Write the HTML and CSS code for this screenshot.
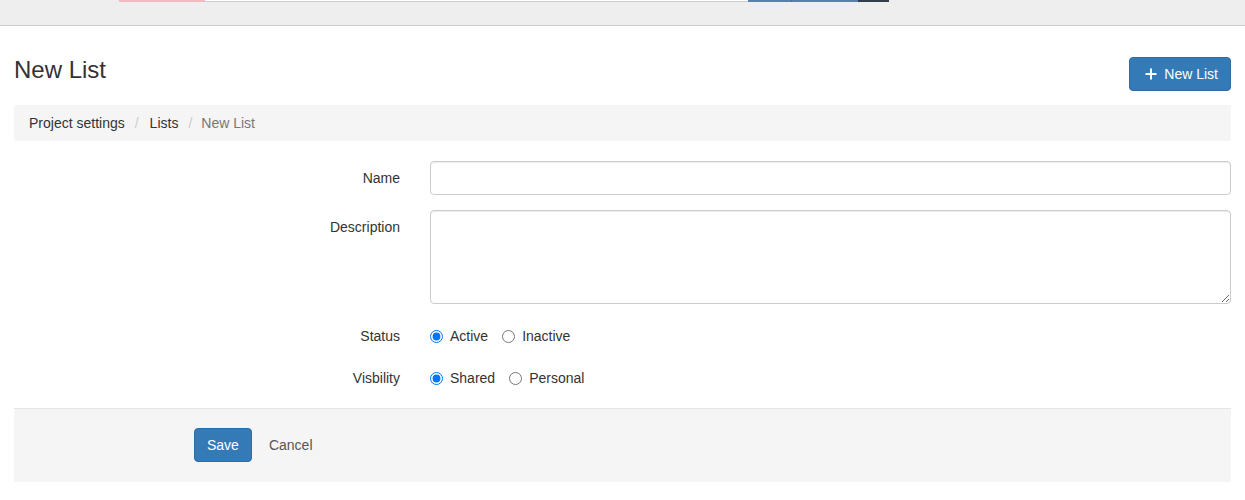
FILE: index.html
```html
<!DOCTYPE html>
<html lang="en">
<head>
    <meta charset="UTF-8">
    <meta name="viewport" content="width=device-width, initial-scale=1.0">
    <title>New List</title>
    <link rel="stylesheet" href="styles.css">
</head>
<body>
    <div class="topbar">
        <div class="topbar-edge">
            <span class="edge-flash"></span>
            <span class="edge-search"></span>
            <span class="edge-btn edge-btn-a"></span>
            <span class="edge-btn edge-btn-b"></span>
            <span class="edge-btn edge-btn-dark"></span>
        </div>
    </div>

    <div class="page">
        <div class="page-head">
            <h2>New List</h2>
            <a class="btn btn-primary" href="#">
                <svg class="icon-plus" width="12" height="12" viewBox="0 0 12 12">
                    <path d="M6 0.5v11M0.5 6h11" stroke="#fff" stroke-width="2" fill="none"/>
                </svg>New List
            </a>
        </div>

        <ol class="breadcrumb">
            <li><a href="#">Project settings</a></li>
            <li><a href="#">Lists</a></li>
            <li class="active">New List</li>
        </ol>

        <form class="list-form">
            <div class="form-row">
                <label for="name">Name</label>
                <div><input type="text" id="name" class="form-control"></div>
            </div>
            <div class="form-row">
                <label for="description">Description</label>
                <div><textarea id="description" class="form-control form-textarea"></textarea></div>
            </div>
            <div class="form-row">
                <label>Status</label>
                <div class="radio-group">
                    <label class="radio-inline"><input type="radio" name="status" checked>Active</label>
                    <label class="radio-inline"><input type="radio" name="status">Inactive</label>
                </div>
            </div>
            <div class="form-row form-row-last">
                <label>Visbility</label>
                <div class="radio-group">
                    <label class="radio-inline"><input type="radio" name="visibility" checked>Shared</label>
                    <label class="radio-inline"><input type="radio" name="visibility">Personal</label>
                </div>
            </div>

            <div class="form-actions">
                <button type="button" class="btn btn-primary">Save</button>
                <a class="btn btn-link" href="#">Cancel</a>
            </div>
        </form>
    </div>
</body>
</html>
```

FILE: styles.css
```css
/* Base */
body {
    margin: 0;
    font-family: "Liberation Sans", Arial, sans-serif;
    font-size: 14px;
    line-height: 20px;
    color: #333;
    background: #fff;
}

a {
    text-decoration: none;
}

/* Top bar, scrolled so only the bottom edge of its controls shows */
.topbar {
    height: 25px;
    background: #eee;
    border-bottom: 1px solid #ccc;
}

.topbar-edge {
    display: flex;
    padding-left: 119px;
    height: 2px;
}

.edge-flash {
    width: 86px;
    background: #efbac1;
}

.edge-search {
    width: 543px;
    height: 1px;
    background: #fff;
    border-bottom: 1px solid #ccc;
}

.edge-btn {
    background: #5a7eae;
}

.edge-btn-a {
    width: 43px;
}

.edge-btn-b {
    width: 66px;
    border-left: 1px solid #4a6c99;
}

.edge-btn-dark {
    width: 31px;
    background: #333d4b;
}

/* Page */
.page {
    padding: 31px 14px 0;
}

.page-head {
    display: flex;
    justify-content: space-between;
    align-items: flex-start;
    margin-bottom: 14px;
}

.page-head h2 {
    margin: 0;
    font-size: 24px;
    font-weight: normal;
    line-height: 26px;
    color: #333;
}

/* Buttons */
.btn {
    display: inline-flex;
    align-items: center;
    height: 34px;
    box-sizing: border-box;
    padding: 6px 12px;
    font-family: inherit;
    font-size: 14px;
    line-height: 20px;
    border: 1px solid transparent;
    border-radius: 4px;
    cursor: pointer;
}

.btn-primary {
    color: #fff;
    background-color: #337ab7;
    border-color: #2e6da4;
}

.btn-primary:hover {
    background-color: #286090;
}

.btn-link {
    color: #555;
    background: none;
}

.icon-plus {
    margin: 0 7px 0 3px;
}

/* Breadcrumb */
.breadcrumb {
    display: flex;
    list-style: none;
    margin: 0 0 20px;
    padding: 8px 15px;
    background: #f5f5f5;
    border-radius: 2px;
}

.breadcrumb a {
    color: #333;
}

.breadcrumb li + li::before {
    content: "/";
    color: #ccc;
    margin: 0 9px 0 10px;
}

.breadcrumb li:nth-child(2) a {
    padding-left: 2px;
}

.breadcrumb .active {
    color: #777;
}

/* Form */
.form-row {
    display: grid;
    grid-template-columns: 386px 1fr;
    column-gap: 30px;
    margin-bottom: 15px;
}

.form-row > label {
    text-align: right;
    padding-top: 7px;
}

.form-row-last {
    margin-bottom: 0;
}

.form-control {
    display: block;
    width: 100%;
    height: 34px;
    box-sizing: border-box;
    padding: 6px 12px;
    font-family: inherit;
    font-size: 14px;
    color: #555;
    background: #fff;
    border: 1px solid #ccc;
    border-radius: 4px;
    box-shadow: inset 0 1px 1px rgba(0, 0, 0, 0.075);
}

.form-textarea {
    height: 94px;
    resize: vertical;
}

.radio-group {
    display: flex;
    gap: 14px;
    padding-top: 7px;
}

.radio-inline {
    display: inline-flex;
    align-items: center;
}

.radio-inline input {
    margin: 0 7px 0 0;
    width: 13px;
    height: 13px;
}

.form-actions {
    margin-top: 20px;
    padding: 19px 20px 20px 180px;
    background: #f5f5f5;
    border-top: 1px solid #e5e5e5;
    display: flex;
    gap: 4px;
}
```
